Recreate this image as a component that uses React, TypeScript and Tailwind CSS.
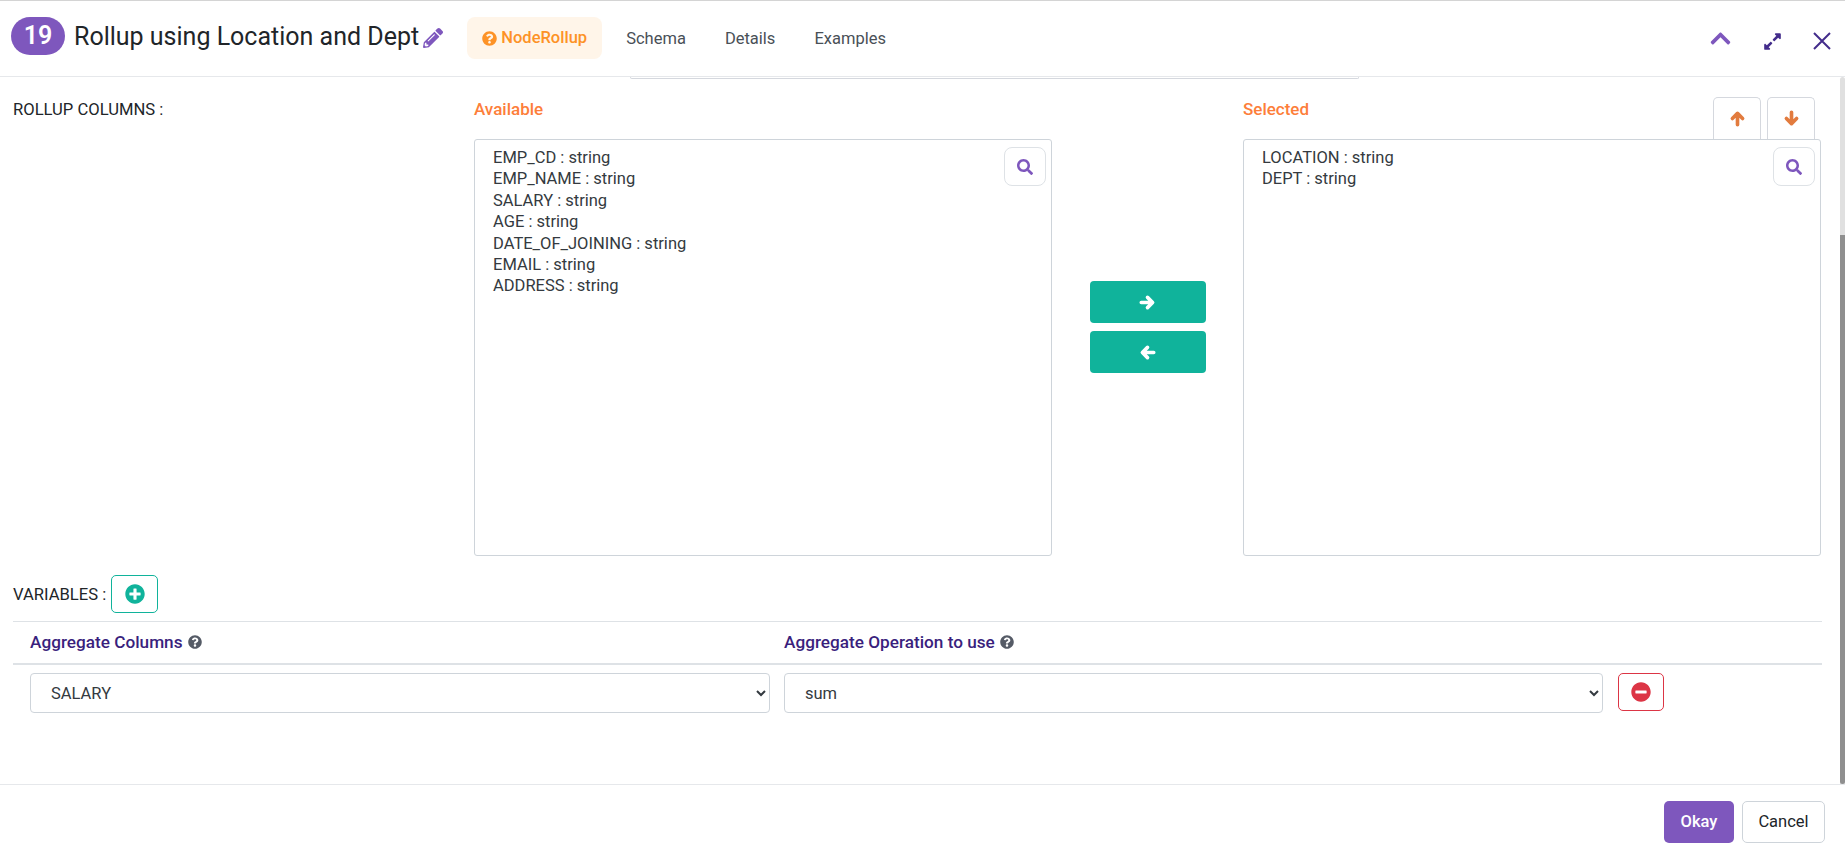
import React from "react";
import {
  FaChevronUp,
  FaExpandAlt,
  FaMinusCircle,
  FaPencilAlt,
  FaPlusCircle,
  FaQuestionCircle,
  FaSearch,
} from "react-icons/fa";

const AVAILABLE = [
  "EMP_CD : string",
  "EMP_NAME : string",
  "SALARY : string",
  "AGE : string",
  "DATE_OF_JOINING : string",
  "EMAIL : string",
  "ADDRESS : string",
];

const SELECTED = ["LOCATION : string", "DEPT : string"];

const ARROWS = {
  right: "M2 7.5h9.5M7.5 3l4.5 4.5L7.5 12",
  left: "M13 7.5H3.5M7.5 3L3 7.5 7.5 12",
  up: "M7.5 13V3.5M3 7.5L7.5 3 12 7.5",
  down: "M7.5 2v9.5M3 7.5L7.5 12 12 7.5",
};

const Arrow = ({ dir }: { dir: keyof typeof ARROWS }) => (
  <svg width="17" height="17" viewBox="0 0 15 15" fill="none" stroke="currentColor" strokeWidth="3.2" strokeLinecap="round" strokeLinejoin="round">
    <path d={ARROWS[dir]} />
  </svg>
);

const ListBox = ({ items }: { items: string[] }) => (
  <div className="relative h-[417px] w-[578px] shrink-0 rounded-[3px] border border-[#ced4da] pl-[18px] pt-[7px] text-[16.5px] leading-[21.4px] text-[#343a40]">
    {items.map((item) => (
      <div key={item}>{item}</div>
    ))}
    <button className="absolute right-[5px] top-[7px] flex h-[39px] w-[42px] items-center justify-center rounded-[8px] border border-[#dee2e6] bg-white">
      <FaSearch className="text-[16px] text-[#7e57bd]" />
    </button>
  </div>
);

const App: React.FC = () => {
  return (
    <div className="flex h-[856px] w-[1845px] flex-col overflow-hidden border-t border-t-[#d4d4d4] bg-white font-['Roboto',sans-serif] text-[#212529]">
      {/* header */}
      <div className="flex h-[76px] shrink-0 items-start border-b border-[#e6e8eb] pl-[11px]">
        <div className="mt-[16px] flex h-[38px] w-[54px] items-center justify-center rounded-[19px] bg-[#7e57bd] text-[25px] font-semibold text-white">
          19
        </div>
        <div className="ml-[9px] mt-[18px] text-[25px] leading-[36px] text-[#212529]">
          Rollup using Location and Dept
        </div>
        <FaPencilAlt className="ml-[4px] mt-[27px] text-[20px] text-[#7e57bd]" />
        <div className="ml-[24px] mt-[16px] flex h-[42px] w-[135px] items-center justify-center gap-[4px] rounded-[8px] bg-[#fff5e9] text-[16.5px] font-medium text-[#fd9226]">
          <FaQuestionCircle className="text-[15px]" />
          NodeRollup
        </div>
        <div className="mt-[17px] flex h-[42px] items-center text-[16.5px] text-[#495057]">
          <span className="ml-[24px]">Schema</span>
          <span className="ml-[39px]">Details</span>
          <span className="ml-[39px]">Examples</span>
        </div>
        <div className="ml-auto mt-[26px] flex items-start">
          <FaChevronUp className="text-[23px] text-[#7e57bd]" />
          <FaExpandAlt className="ml-[31px] mt-[5px] text-[19px] text-[#432c8b]" />
          <svg
            className="ml-[31px] mr-[14px] mt-[5px]"
            width="18"
            height="18"
            viewBox="0 0 18 18"
            fill="none"
            stroke="#432c8b"
            strokeWidth="2"
          >
            <path d="M1 1l16 16M17 1L1 17" />
          </svg>
        </div>
      </div>

      {/* scrolling body */}
      <div className="relative flex min-h-0 flex-1">
        <div className="min-w-0 flex-1 pl-[13px]">
          <div className="ml-[617px] h-[2px] w-[729px] rounded-b-[6px] border-b border-x border-[#d5d8de]" />

          <div className="mt-[20px] flex items-start">
            <div className="w-[461px] text-[16.6px] leading-[21px]">
              ROLLUP COLUMNS :
            </div>
            <div className="w-[578px]">
              <div className="h-[40px] text-[17px] font-medium leading-[21px] text-[#fd7e3a]">
                Available
              </div>
              <ListBox items={AVAILABLE} />
            </div>
            <div className="flex w-[191px] flex-col items-center pt-[182px]">
              <button className="flex h-[42px] w-[116px] items-center justify-center rounded-[4px] bg-[#10b39b] text-white">
                <Arrow dir="right" />
              </button>
              <button className="mt-[8px] flex h-[42px] w-[116px] items-center justify-center rounded-[4px] bg-[#10b39b] text-white">
                <Arrow dir="left" />
              </button>
            </div>
            <div className="w-[578px]">
              <div className="flex h-[40px] items-start justify-between">
                <div className="text-[17px] font-medium leading-[21px] text-[#fd7e3a]">
                  Selected
                </div>
                <div className="-mt-[2px] mr-[6px] flex gap-[6px]">
                  <button className="flex h-[42px] w-[48px] items-center justify-center rounded-t-[5px] border border-b-0 border-[#d5d8de] text-[#e27b3e]">
                    <Arrow dir="up" />
                  </button>
                  <button className="flex h-[42px] w-[48px] items-center justify-center rounded-t-[5px] border border-b-0 border-[#d5d8de] text-[#e27b3e]">
                    <Arrow dir="down" />
                  </button>
                </div>
              </div>
              <ListBox items={SELECTED} />
            </div>
          </div>

          <div className="mt-[19px] flex items-center gap-[5px] text-[16.6px]">
            <span className="pt-[2px]">VARIABLES :</span>
            <button className="flex h-[38px] w-[47px] items-center justify-center rounded-[5px] border border-[#10b39b] text-[20px] text-[#10b39b]">
              <FaPlusCircle />
            </button>
          </div>

          <div className="mr-[18px] mt-[8px] flex h-[42px] items-center border-t border-[#dee2e6] pl-[17px] text-[17.2px] font-medium text-[#3a1f7d]">
            <div className="flex w-[754px] items-center gap-[5px]">
              Aggregate Columns
              <FaQuestionCircle className="text-[14px] text-[#555b66]" />
            </div>
            <div className="flex items-center gap-[5px]">
              Aggregate Operation to use
              <FaQuestionCircle className="text-[14px] text-[#555b66]" />
            </div>
          </div>
          <div className="mr-[18px] flex border-t-2 border-[#dee2e6] pl-[17px] pt-[8px]">
            <select className="h-[40px] w-[740px] rounded-[4px] border border-[#ced4da] bg-white pl-[16px] pr-[8px] text-[16.5px] text-[#343a40]">
              <option>SALARY</option>
            </select>
            <select className="ml-[14px] h-[40px] w-[819px] rounded-[4px] border border-[#ced4da] bg-white pl-[16px] pr-[8px] text-[16.5px] text-[#343a40]">
              <option>sum</option>
            </select>
            <button className="ml-[15px] flex h-[38px] w-[46px] items-center justify-center rounded-[5px] border border-[#dc3545] text-[20px] text-[#dc3545]">
              <FaMinusCircle />
            </button>
          </div>
        </div>
        {/* scrollbar */}
        <div className="w-[5px] shrink-0 rounded-t-[3px] bg-[#e0e0e0] pt-[158px]">
          <div className="h-[549px] rounded-b-[3px] bg-[#8f8f8f]" />
        </div>
      </div>

      {/* footer */}
      <div className="flex h-[72px] shrink-0 items-start justify-end gap-[8px] border-t border-[#e6e8eb] pr-[20px] pt-[16px] text-[16.5px]">
        <button className="flex h-[42px] w-[70px] items-center justify-center rounded-[5px] bg-[#7e57bd] font-medium text-white">
          Okay
        </button>
        <button className="flex h-[42px] w-[83px] items-center justify-center rounded-[5px] border border-[#ced4da] bg-white text-[#212529]">
          Cancel
        </button>
      </div>
    </div>
  );
};

export default App;
